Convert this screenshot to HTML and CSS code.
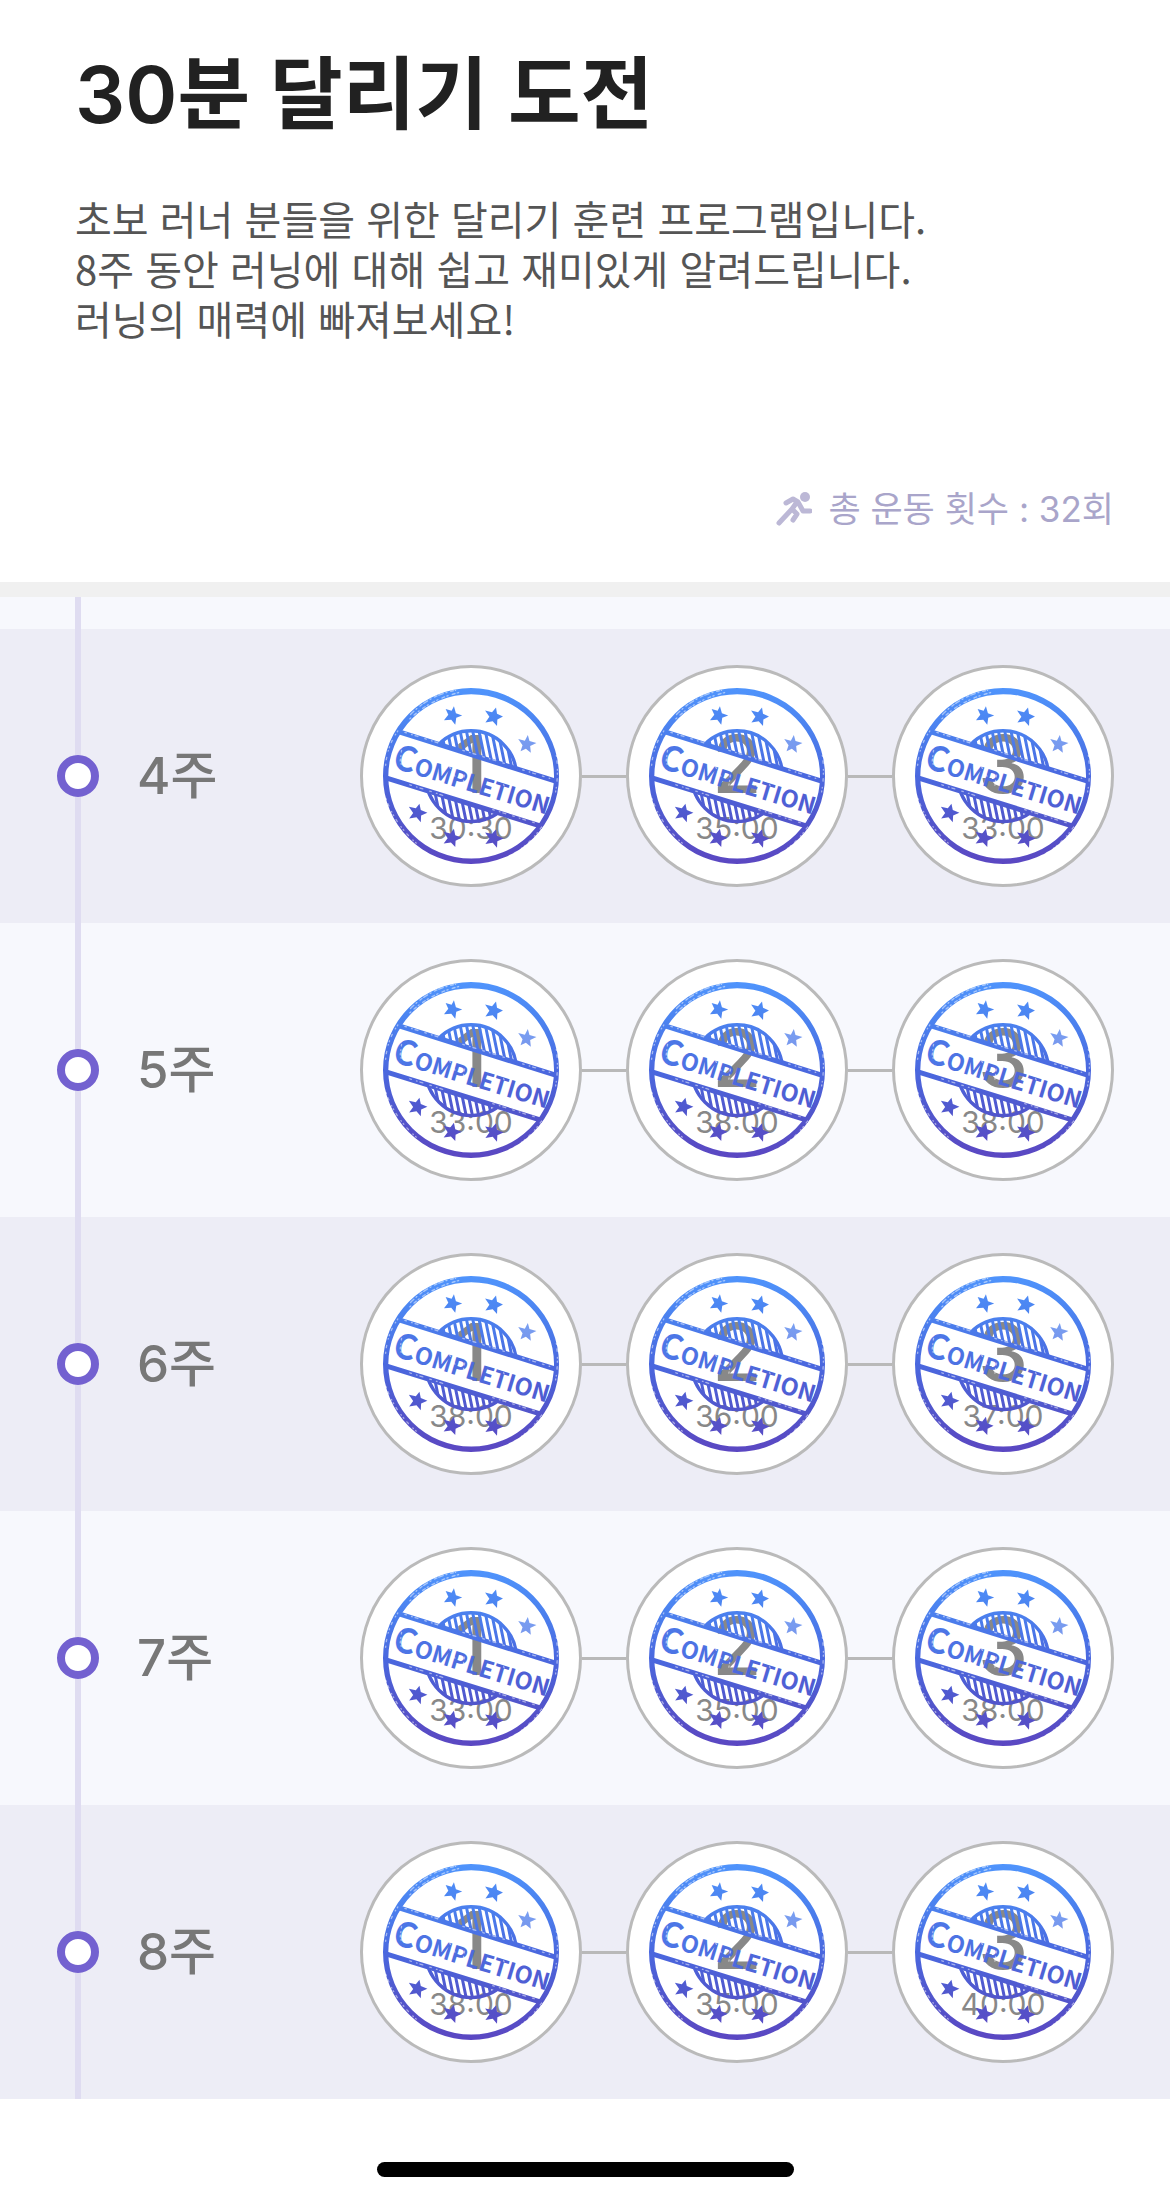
FILE: index.html
```html
<!DOCTYPE html>
<html lang="ko">
<head>
    <meta charset="UTF-8">
    <meta name="viewport" content="width=device-width, initial-scale=1">
    <title>30분 달리기 도전</title>
    <link rel="stylesheet" href="styles.css">
</head>

<body>
    <!-- shared stamp artwork -->
    <svg class="defs" aria-hidden="true">
        <defs>
            <linearGradient id="ink" gradientUnits="userSpaceOnUse" x1="0" y1="97" x2="0" y2="628">
                <stop offset="0" stop-color="#4f94fc" />
                <stop offset="0.25" stop-color="#4b80ee" />
                <stop offset="0.5" stop-color="#4a68df" />
                <stop offset="0.75" stop-color="#5156cc" />
                <stop offset="1" stop-color="#5b47c2" />
            </linearGradient>
            <linearGradient id="ink-text" gradientUnits="userSpaceOnUse" x1="0" y1="0" x2="470" y2="0">
                <stop offset="0" stop-color="#4c78e8" />
                <stop offset="1" stop-color="#4f5cd2" />
            </linearGradient>
            <clipPath id="upper"><path d="M90 211L640 385V90H90Z" /></clipPath>
            <clipPath id="lower"><path d="M90 363L640 535V640H90Z" /></clipPath>
            <clipPath id="medal"><circle cx="365" cy="363" r="138" /></clipPath>
            <g id="badge" fill="none" stroke="url(#ink)">
                <circle cx="365" cy="363" r="137" stroke-width="10" />
                <g clip-path="url(#medal)">
                    <path d="M170 180l70 340M189 180l70 340M208 180l70 340M227 180l70 340M246 180l70 340M265 180l70 340M284 180l70 340M303 180l70 340M322 180l70 340M341 180l70 340M360 180l70 340M379 180l70 340M398 180l70 340M417 180l70 340M436 180l70 340M455 180l70 340" stroke-width="9" />
                </g>
            </g>
        </defs>
        <symbol id="stamp" viewBox="99 97 531 531">
            <g clip-path="url(#upper)"><use href="#badge" /></g>
            <g clip-path="url(#lower)"><use href="#badge" /></g>
            <path fill="url(#ink)" fill-rule="evenodd" d="M99 362.500a265.500 265.500 0 1 0 531 0a265.500 265.500 0 1 0 -531 0ZM115 363.500a250 248 0 1 0 500 0a250 248 0 1 0 -500 0Z" />
            <path d="M150 230L622 379M108 368L580 515" fill="none" stroke="url(#ink)" stroke-width="15" />
            <g fill="url(#ink)">
                <path d="M313 152L319 173L338 180L320 187L317 208L305 193L283 194L296 178L288 160L306 166Z" />
                <path d="M440 156L443 175L461 183L444 192L443 212L430 197L408 201L420 184L407 165L428 170Z" />
                <path d="M536 239L541 257L562 263L543 272L545 292L530 280L514 288L520 270L507 251L527 256Z" opacity="0.75" />
                <path d="M209 446L213 465L233 473L214 482L213 502L200 487L178 491L190 474L177 455L198 460Z" />
                <path d="M313 522L317 541L336 549L318 558L317 577L304 563L282 566L294 550L282 531L302 536Z" />
                <path d="M440 523L443 543L463 551L444 559L443 579L430 564L408 568L420 551L407 533L428 537Z" />
            </g>
            <text class="stamp-text" transform="translate(124 336) rotate(17)" fill="url(#ink-text)"><tspan class="stamp-cap">C</tspan>OMPLETION</text>
            <!-- worn ink -->
            <g fill="none" stroke="#fff" stroke-linecap="round" opacity="0.5">
                <path d="M182 177Q240 118 318 104" stroke-width="4" stroke-dasharray="14 9 3 12 8 6" />
                <path d="M180 190Q240 132 330 110" stroke-width="4" stroke-dasharray="4 13 9 7" />
                <path d="M107 330Q112 270 145 225M622 300Q630 360 618 420M108 430Q135 510 205 570M480 603Q540 575 585 505" stroke-width="4" stroke-dasharray="3 14 7 19 2 9" />
                <path d="M165 231L270 264M340 285L480 329M520 344L610 372M180 389L280 421M430 464L560 505" stroke-width="4" stroke-dasharray="5 16 2 9 9 22" />
                <path d="M155 285L150 325L185 335M455 375L480 420M345 360L340 390M300 335L320 370" stroke-width="4" stroke-dasharray="5 11 3 8" />
            </g>
        </symbol>
    </svg>

    <header class="intro">
        <h1>30분 달리기 도전</h1>
        <p class="description">
            초보 러너 분들을 위한 달리기 훈련 프로그램입니다.<br>
            8주 동안 러닝에 대해 쉽고 재미있게 알려드립니다.<br>
            러닝의 매력에 빠져보세요!
        </p>
        <p class="total">
            <svg class="runner" viewBox="0 0 36 36" aria-hidden="true">
                <circle cx="29" cy="6" r="5" />
                <path d="M10 12L17 8L22 11L27 20H34M21 11L16 18L3 32M16 18L21 23L17 29" />
            </svg>
            총 운동 횟수 : 32회
        </p>
    </header>

    <main>
        <ol class="weeks" id="weeks"></ol>
    </main>

    <footer class="home"><div class="home-bar"></div></footer>

    <script>
        const weeks = [
            { week: 4, times: ["30:30", "35:00", "33:00"] },
            { week: 5, times: ["33:00", "38:00", "38:00"] },
            { week: 6, times: ["38:00", "36:00", "37:00"] },
            { week: 7, times: ["33:00", "35:00", "38:00"] },
            { week: 8, times: ["38:00", "35:00", "40:00"] }
        ];

        const list = document.getElementById("weeks");

        weeks.forEach((item) => {
            const row = document.createElement("li");
            row.className = "week";
            row.innerHTML = `
                <span class="dot"></span>
                <h2>${item.week}주</h2>
                <div class="sessions">
                    ${item.times.map((time, index) => `
                        <button class="session" type="button">
                            <span class="number">${index + 1}</span>
                            <span class="time">${time}</span>
                            <svg class="stamp" aria-hidden="true"><use href="#stamp" /></svg>
                        </button>
                    `).join('<span class="link"></span>')}
                </div>`;
            list.appendChild(row);
        });
    </script>
</body>
</html>
```
FILE: styles.css
```css
* {
    box-sizing: border-box;
}

body {
    margin: 0;
    min-height: 100vh;
    display: flex;
    flex-direction: column;
    background: #fff;
    font-family: Inter, "Noto Sans CJK KR", sans-serif;
}

.defs {
    position: absolute;
    width: 0;
    height: 0;
}

.intro {
    padding: 40px 56px 47px 75px;
    border-bottom: 15px solid #f0f0f0;
}

h1 {
    margin: 0;
    font-size: 79px;
    font-weight: 600;
    line-height: 108px;
    color: #212121;
}

.description {
    margin: 45px 0 0;
    font-family: "Noto Sans CJK KR", sans-serif;
    font-size: 40px;
    line-height: 50px;
    color: #555;
}

.total {
    display: flex;
    align-items: center;
    justify-content: flex-end;
    gap: 16px;
    margin: 140px 0 0;
    font-size: 35px;
    line-height: 52px;
    color: #a9a5ca;
}

.runner {
    width: 36px;
    height: 36px;
    fill: #bcb8d6;
}

.runner path {
    fill: none;
    stroke: #bcb8d6;
    stroke-width: 5;
    stroke-linecap: round;
    stroke-linejoin: round;
}

.weeks {
    position: relative;
    margin: 0;
    padding: 32px 0 0;
    list-style: none;
    background: #f7f8fd;
}

/* timeline running behind the dots */
.weeks::before {
    content: "";
    position: absolute;
    top: 0;
    bottom: 0;
    left: 75px;
    width: 6px;
    background: #dfdcf1;
    z-index: 1;
}

.week {
    display: flex;
    align-items: center;
    padding: 36px 56px 36px 57px;
}

.week:nth-child(odd) {
    background: #ededf6;
}

.dot {
    width: 42px;
    height: 42px;
    border: 8px solid #7361d0;
    border-radius: 50%;
    background: #fff;
    z-index: 2;
}

h2 {
    margin: 0 0 0 38px;
    font-size: 51px;
    font-weight: 500;
    line-height: 60px;
    color: #777;
}

.sessions {
    display: flex;
    align-items: center;
    margin-left: auto;
}

.link {
    width: 44px;
    height: 3px;
    background: #b9b9b9;
}

.session {
    position: relative;
    display: flex;
    flex-direction: column;
    align-items: center;
    justify-content: center;
    width: 222px;
    height: 222px;
    padding: 24px 0 0;
    border: 3px solid #bababa;
    border-radius: 50%;
    background: #fff;
    font-family: inherit;
    color: #888;
}

.number {
    font-size: 80px;
    font-weight: 500;
    line-height: 80px;
}

.time {
    font-size: 30px;
    line-height: 48px;
}

.stamp {
    position: absolute;
    inset: 20px;
    width: 176px;
    height: 176px;
}

.stamp-text {
    font-family: "Noto Sans CJK KR", sans-serif;
    font-size: 71px;
    font-weight: 700;
}

.stamp-cap {
    font-size: 103px;
}

.home {
    padding: 63px 0 24px;
}

.home-bar {
    width: 417px;
    height: 15px;
    margin: 0 auto;
    border-radius: 8px;
    background: #000;
}
```
